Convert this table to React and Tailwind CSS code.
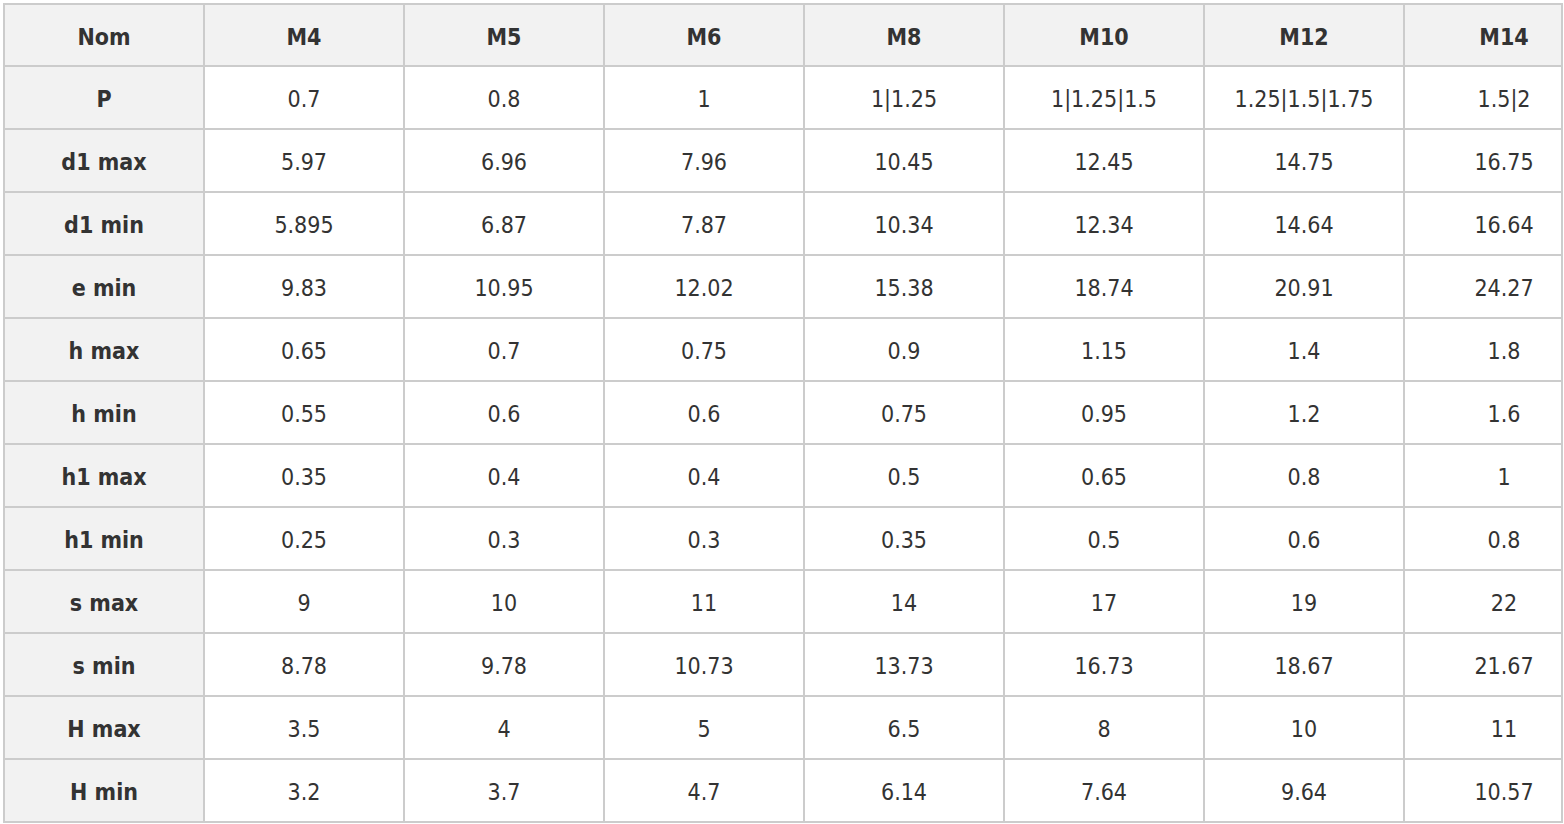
const cols = ["Nom", "M4", "M5", "M6", "M8", "M10", "M12", "M14"];

const rows = [
  ["P", "0.7", "0.8", "1", "1|1.25", "1|1.25|1.5", "1.25|1.5|1.75", "1.5|2"],
  ["d1 max", "5.97", "6.96", "7.96", "10.45", "12.45", "14.75", "16.75"],
  ["d1 min", "5.895", "6.87", "7.87", "10.34", "12.34", "14.64", "16.64"],
  ["e min", "9.83", "10.95", "12.02", "15.38", "18.74", "20.91", "24.27"],
  ["h max", "0.65", "0.7", "0.75", "0.9", "1.15", "1.4", "1.8"],
  ["h min", "0.55", "0.6", "0.6", "0.75", "0.95", "1.2", "1.6"],
  ["h1 max", "0.35", "0.4", "0.4", "0.5", "0.65", "0.8", "1"],
  ["h1 min", "0.25", "0.3", "0.3", "0.35", "0.5", "0.6", "0.8"],
  ["s max", "9", "10", "11", "14", "17", "19", "22"],
  ["s min", "8.78", "9.78", "10.73", "13.73", "16.73", "18.67", "21.67"],
  ["H max", "3.5", "4", "5", "6.5", "8", "10", "11"],
  ["H min", "3.2", "3.7", "4.7", "6.14", "7.64", "9.64", "10.57"],
];

const App = () => {
  return (
    <div className="w-full min-h-screen bg-white pt-[3px] pl-[3px] font-['DejaVu_Sans_Condensed','DejaVu_Sans',sans-serif] text-[#333]">
      <div className="w-[1560px] overflow-hidden border-r-2 border-[#ccc]">
        <div className="w-[1602px] grid grid-cols-[repeat(8,200px)] border-l-2 border-t-2 border-[#ccc]">
          {/* header row */}
          {cols.map((c) => (
            <div
              key={c}
              className="h-[62px] pt-1 bg-[#f2f2f2] border-r-2 border-b-2 border-[#ccc] flex items-center justify-center text-[23px] font-bold"
            >
              {c}
            </div>
          ))}

          {/* body rows */}
          {rows.map((r) =>
            r.map((v, i) => (
              <div
                key={r[0] + i}
                className={
                  i === 0
                    ? "h-[63px] pt-1 bg-[#f2f2f2] border-r-2 border-b-2 border-[#ccc] flex items-center justify-center text-[23px] font-bold"
                    : "h-[63px] pt-1 bg-white border-r-2 border-b-2 border-[#ccc] flex items-center justify-center text-[23px]"
                }
              >
                {v}
              </div>
            ))
          )}
        </div>
      </div>
    </div>
  );
};

export default App;
